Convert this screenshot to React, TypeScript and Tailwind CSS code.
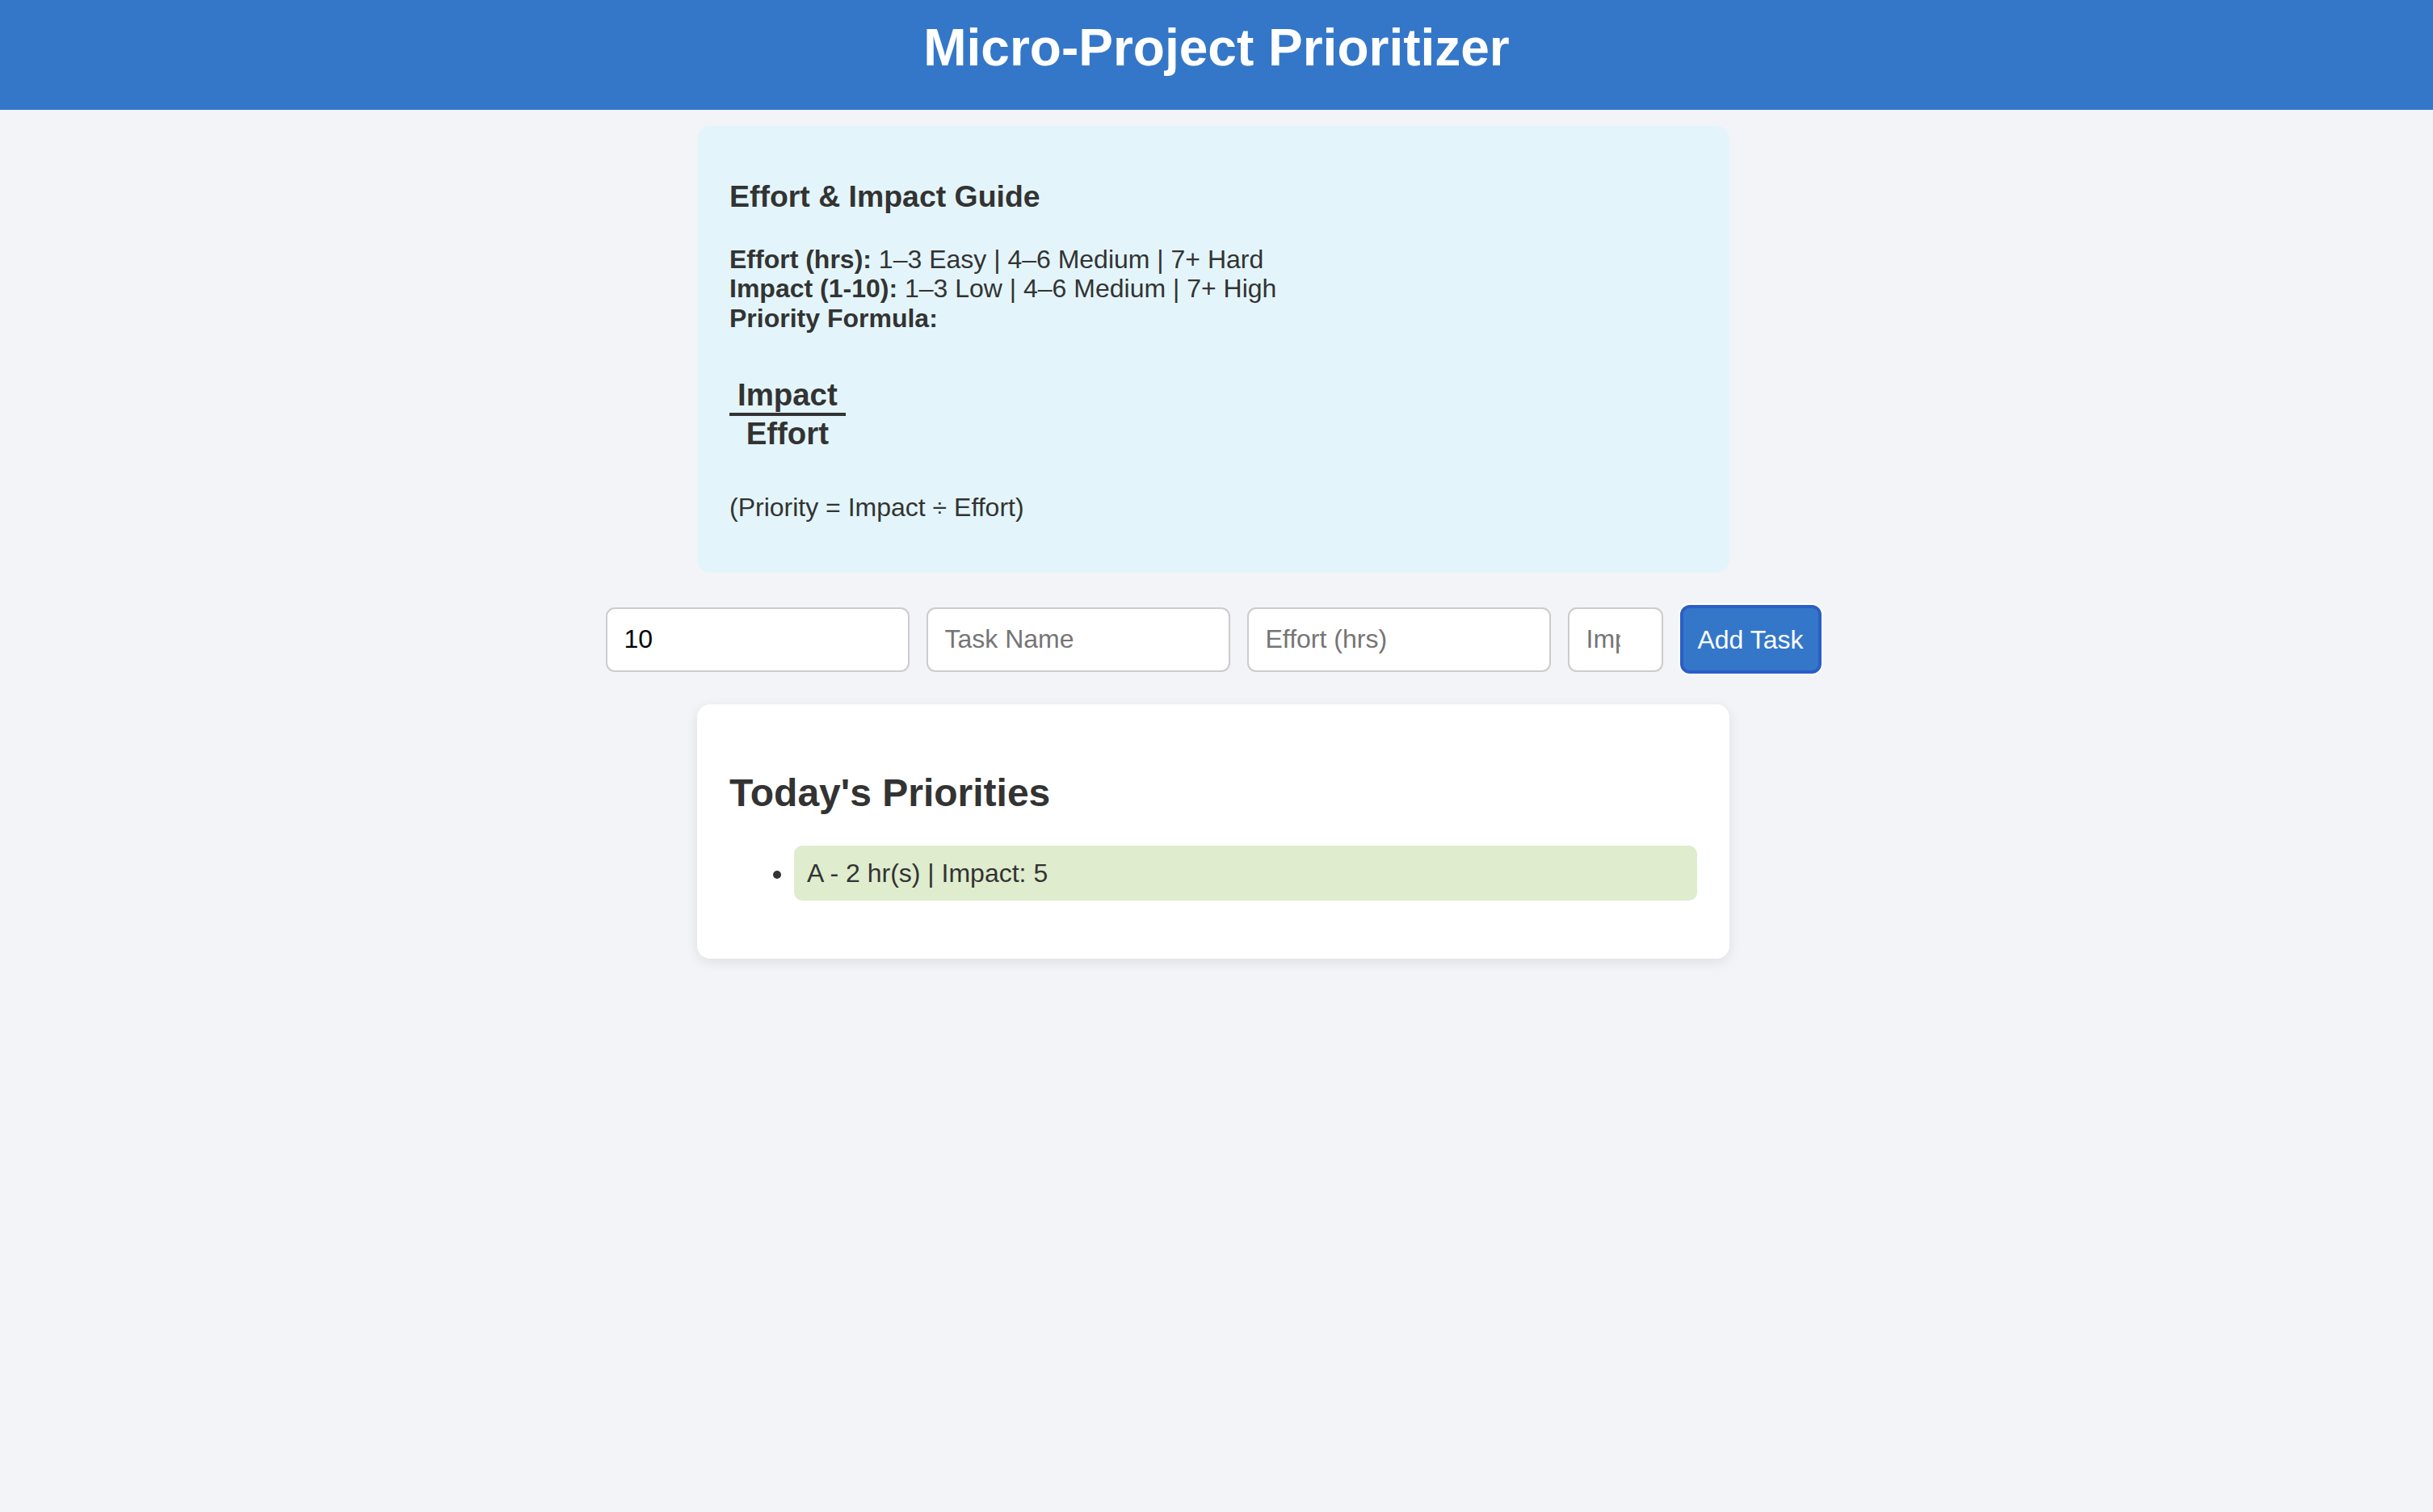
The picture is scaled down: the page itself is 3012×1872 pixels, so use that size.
import { useState } from 'react'

// all sizes are device pixels of the reference (2x of the original CSS)
const tasks = [{ id: 1, name: 'A', effort: 2, impact: 5 }]

export default function App() {
  const [taskName, setTaskName] = useState('')
  const [effort, setEffort] = useState('')
  const [impact, setImpact] = useState('')

  return (
    <div className="min-h-screen bg-[#f3f4f8] font-['Liberation_Sans',Arial,sans-serif] text-[#333]">
      {/* Header */}
      <header className="h-[136px] bg-[#3477c9] pt-[22px] text-center">
        <h1 className="text-[64px] font-bold leading-[74px] text-white">Micro-Project Prioritizer</h1>
      </header>

      <main className="pr-[8px]">
        {/* Guide */}
        <section className="mx-auto mt-[20px] w-[1278px] rounded-[16px] bg-[#e3f5fa] px-[40px] pt-[30px] pb-[62px]">
          <h3 className="mt-[36px] text-[37.44px] font-bold leading-[43px]">Effort &amp; Impact Guide</h3>
          <p className="mt-[37.5px] text-[32px] leading-[36.8px]">
            <strong>Effort (hrs):</strong> 1–3 Easy | 4–6 Medium | 7+ Hard
            <br />
            <strong>Impact (1-10):</strong> 1–3 Low | 4–6 Medium | 7+ High
            <br />
            <strong>Priority Formula:</strong>
          </p>
          <div className="mt-[54.4px] inline-flex flex-col text-center text-[38.4px] font-bold leading-[44px]">
            <span className="border-b-[4px] border-[#333] px-[10px]">Impact</span>
            <span className="px-[10px]">Effort</span>
          </div>
          <p className="mt-[51px] text-[32px] leading-[36.8px]">(Priority = Impact ÷ Effort)</p>
        </section>

        {/* Add task form */}
        <div className="mx-auto mt-[40px] flex w-[1505px] items-center gap-[21px]">
          <input
            type="text"
            defaultValue="10"
            className="h-[80px] w-[376px] rounded-[11px] border-2 border-[#cccccc] bg-white px-[21px] text-[32px] text-black outline-none"
          />
          <input
            type="text"
            placeholder="Task Name"
            value={taskName}
            onChange={(e) => setTaskName(e.target.value)}
            className="h-[80px] w-[376px] rounded-[11px] border-2 border-[#cccccc] bg-white px-[21px] text-[32px] text-black outline-none placeholder:text-[#757575]"
          />
          <input
            type="text"
            placeholder="Effort (hrs)"
            value={effort}
            onChange={(e) => setEffort(e.target.value)}
            className="h-[80px] w-[376px] rounded-[11px] border-2 border-[#cccccc] bg-white px-[21px] text-[32px] text-black outline-none placeholder:text-[#757575]"
          />
          <input
            type="text"
            placeholder="Impact"
            value={impact}
            onChange={(e) => setImpact(e.target.value)}
            className="h-[80px] w-[118px] rounded-[11px] border-2 border-[#cccccc] bg-white pl-[21px] pr-[51px] text-[32px] text-black outline-none placeholder:text-[#757575]"
          />
          <button className="h-[85px] w-[175px] rounded-[12px] border-[4px] border-[#2b5ec6] bg-[#3477c9] text-[32px] text-white shadow-[0_0_0_2px_#ffffff]">
            Add Task
          </button>
        </div>

        {/* Priorities */}
        <section className="mx-auto mt-[38px] w-[1278px] rounded-[16px] bg-white px-[40px] pt-[41.5px] pb-[72px] shadow-[0_4px_16px_rgba(0,0,0,0.09)]">
          <h2 className="mt-[40px] text-[48px] font-bold leading-[55px]">Today&apos;s Priorities</h2>
          <ul className="mt-[38px] list-disc pl-[80px]">
            {tasks.map((t) => (
              <li key={t.id} className="rounded-[10px] bg-[#dfecce] p-[16px] text-[32px] leading-[36.8px]">
                {t.name} - {t.effort} hr(s) | Impact: {t.impact}
              </li>
            ))}
          </ul>
        </section>
      </main>
    </div>
  )
}
